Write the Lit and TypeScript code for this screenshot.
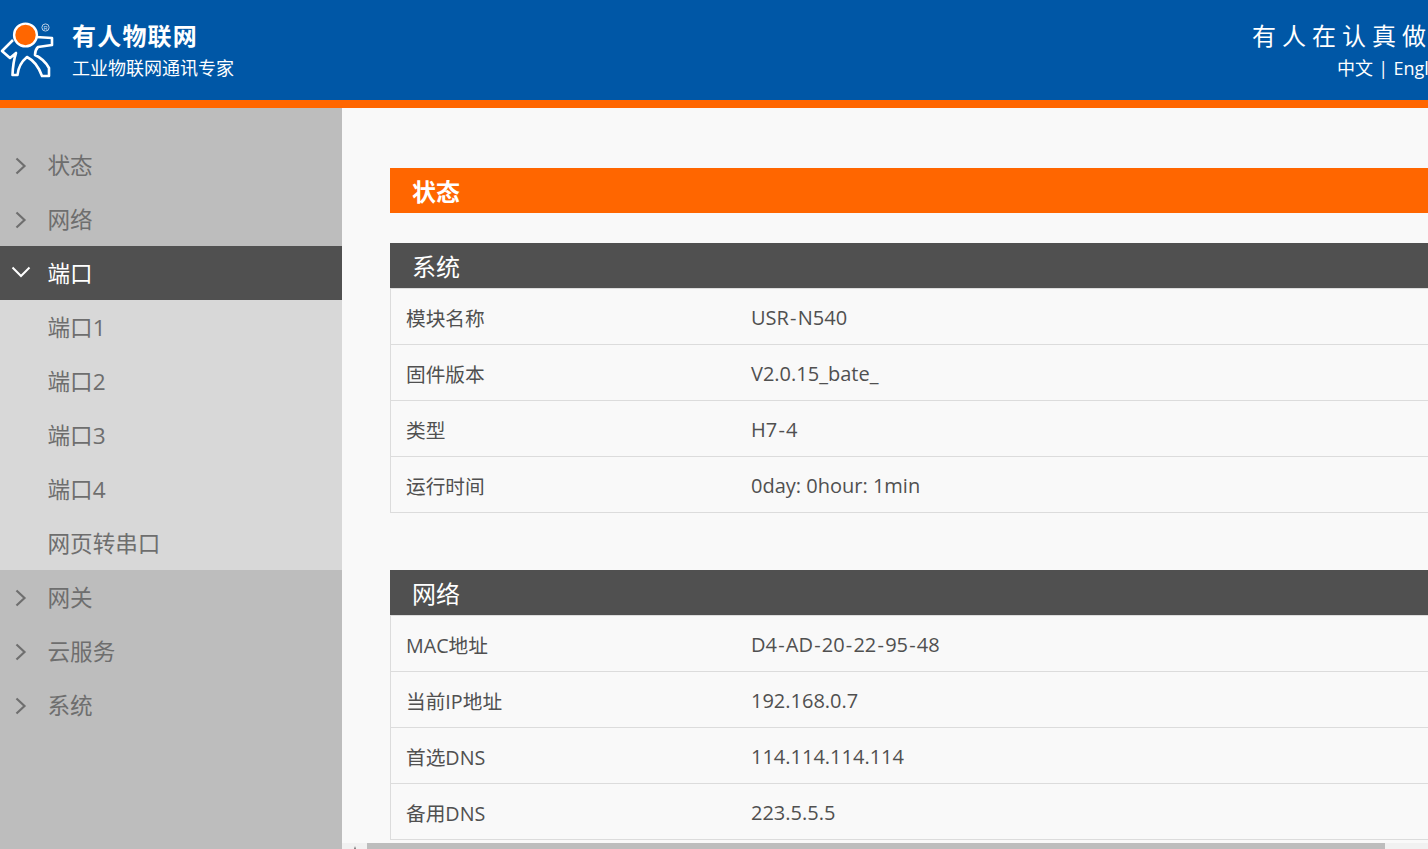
import { LitElement, html, css } from "lit";
import { customElement } from "lit/decorators.js";

const chevRight = html`<svg class="chev" width="12" height="18" viewBox="0 0 12 18"><path d="M1.5 1.5L9.5 9L1.5 16.5" fill="none" stroke="#6f6f6f" stroke-width="2.2"/></svg>`;
const chevDown = html`<svg class="chev down" width="20" height="12" viewBox="0 0 20 12"><path d="M1.5 1.5L10 10L18.5 1.5" fill="none" stroke="#fff" stroke-width="2"/></svg>`;

const logo = html`<svg width="54" height="60" viewBox="0 0 54 60">
  <path d="M13 20 L2 31 L10 38 L16 33 Q13 42 12.5 55 L17.5 55 Q18.5 44 27 37 Q37 42 42 56 L49 56 L49 48 Q44 39 35 35 Q35 30 38 27 L52 25 L52 18 L36 17"
    fill="none" stroke="#fff" stroke-width="2.6" stroke-linejoin="round"/>
  <circle cx="25.5" cy="15" r="11.4" fill="#ff6600" stroke="#fff" stroke-width="2.4"/>
  <circle cx="45.5" cy="7.5" r="3.6" fill="none" stroke="#b9cfe6" stroke-width="1"/>
  <text x="45.5" y="9.5" font-size="5.5" fill="#cfdff0" text-anchor="middle" font-family="Liberation Sans">R</text>
</svg>`;

const menuTop = ["状态", "网络"];
const subs = ["端口1", "端口2", "端口3", "端口4", "网页转串口"];
const menuBottom = ["网关", "云服务", "系统"];

const sys = [
  ["模块名称", "USR-N540"],
  ["固件版本", "V2.0.15_bate_"],
  ["类型", "H7-4"],
  ["运行时间", "0day: 0hour: 1min"],
];
const net = [
  ["MAC地址", "D4-AD-20-22-95-48"],
  ["当前IP地址", "192.168.0.7"],
  ["首选DNS", "114.114.114.114"],
  ["备用DNS", "223.5.5.5"],
];

@customElement("app-root")
export class AppRoot extends LitElement {
  static styles = css`
    :host {
      display: block;
      position: relative;
      width: 1428px;
      height: 849px;
      overflow: hidden;
      background: #f9f9f9;
      font-family: "Open Sans", "Noto Sans CJK SC", sans-serif;
      color: #505050;
    }
    .header {
      height: 100px;
      background: #0057a6;
      border-bottom: 8px solid #ff6600;
      display: flex;
      color: #fff;
      white-space: nowrap;
    }
    .logo { margin-top: 20px; width: 72px; flex: none; }
    .logo svg { display: block; }
    .brand { width: 1180px; flex: none; padding-top: 19px; }
    .brand-name { font-size: 24px; line-height: 34px; font-weight: 700; letter-spacing: 1.2px; }
    .brand-sub { font-size: 18px; line-height: 26px; margin-top: 2px; }
    .slogan { padding-top: 19px; width: 176px; flex: none; overflow: hidden; }
    .slogan-main { font-size: 24px; line-height: 34px; letter-spacing: 6px; }
    .lang { font-size: 18px; line-height: 26px; margin-top: 2px; padding-left: 85px; word-spacing: 0.6px; }
    .body { display: flex; height: 741px; }
    .side { width: 342px; flex: none; background: #bdbdbd; padding-top: 30px; }
    .item {
      height: 54px;
      box-sizing: border-box;
      padding-bottom: 2px;
      display: flex;
      align-items: center;
      font-size: 22.6px;
      color: #6e6e6e;
    }
    .ico { width: 47.5px; flex: none; display: flex; padding-left: 15px; padding-top: 3px; box-sizing: border-box; }
    .ico svg { display: block; }
    .item.active { background: #505050; color: #fff; }
    .item.active .ico { padding-left: 11px; padding-top: 0; }
    .subs { background: #d8d8d8; }
    .main { flex: 1; min-width: 0; padding: 60px 0 0 48px; }
    .title {
      height: 45px;
      line-height: 47px;
      background: #ff6600;
      color: #fff;
      font-size: 24px;
      font-weight: 700;
      padding-left: 22px;
    }
    .section { margin-top: 30px; }
    .section + .section { margin-top: 57px; }
    .sec-head {
      height: 45px;
      line-height: 48px;
      background: #505050;
      color: #fff;
      font-size: 24px;
      padding-left: 22px;
    }
    .rows { border-left: 1px solid #dcdcdc; border-bottom: 1px solid #dcdcdc; }
    .row {
      height: 56px;
      box-sizing: border-box;
      padding-top: 2px;
      border-top: 1px solid #dcdcdc;
      display: flex;
      align-items: center;
      font-size: 20px;
    }
    .k { width: 345px; padding-left: 15px; flex: none; font-size: 19.7px; }
    .hy { padding: 0 1.2px; }
    .scroll {
      position: absolute;
      left: 342px;
      right: 0;
      bottom: 0;
      height: 6px;
      background: #f1f1f1;
    }
    .arrow {
      position: absolute;
      left: 12px;
      top: 3px;
      width: 0;
      height: 0;
      border-left: 1.5px solid transparent;
      border-right: 1.5px solid transparent;
      border-bottom: 3px solid #777;
    }
    .thumb {
      position: absolute;
      left: 25px;
      width: 1018px;
      top: 0;
      bottom: 0;
      background: #bdbdbd;
    }
  `;

  private value(v: string) {
    const parts = v.split("-");
    return parts.map((p, i) => (i === 0 ? p : html`<span class="hy">-</span>${p}`));
  }

  private table(head: string, rows: string[][]) {
    return html`<div class="section">
      <div class="sec-head">${head}</div>
      <div class="rows">
        ${rows.map(([k, v]) => html`<div class="row"><div class="k">${k}</div><div>${this.value(v)}</div></div>`)}
      </div>
    </div>`;
  }

  render() {
    return html`
      <div class="header">
        <div class="logo">${logo}</div>
        <div class="brand">
          <div class="brand-name">有人物联网</div>
          <div class="brand-sub">工业物联网通讯专家</div>
        </div>
        <div class="slogan">
          <div class="slogan-main">有人在认真做事</div>
          <div class="lang">中文 | English</div>
        </div>
      </div>
      <div class="body">
        <nav class="side">
          ${menuTop.map((m) => html`<div class="item"><span class="ico">${chevRight}</span>${m}</div>`)}
          <div class="item active"><span class="ico">${chevDown}</span>端口</div>
          <div class="subs">
            ${subs.map((m) => html`<div class="item"><span class="ico"></span>${m}</div>`)}
          </div>
          ${menuBottom.map((m) => html`<div class="item"><span class="ico">${chevRight}</span>${m}</div>`)}
        </nav>
        <main class="main">
          <div class="title">状态</div>
          ${this.table("系统", sys)}
          ${this.table("网络", net)}
        </main>
      </div>
      <div class="scroll"><div class="arrow"></div><div class="thumb"></div></div>
    `;
  }
}
